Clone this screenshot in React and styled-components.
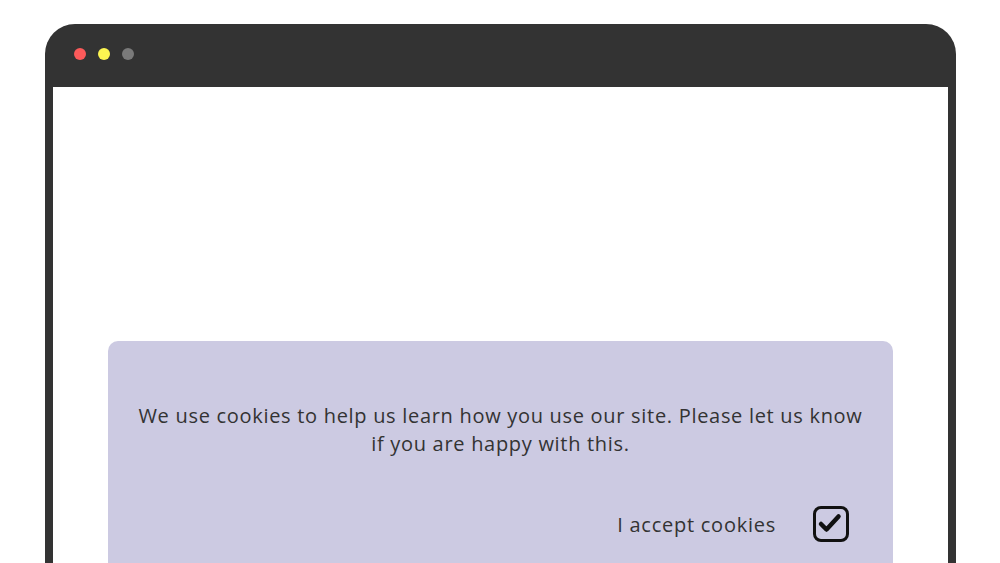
import styled, { createGlobalStyle } from "styled-components";

const GlobalStyle = createGlobalStyle`
  html, body {
    margin: 0;
    padding: 0;
    background: #ffffff;
    overflow: hidden;
  }
  body {
    font-family: "Open Sans", "Liberation Sans", sans-serif;
  }
`;

const Page = styled.div`
  width: 1000px;
  height: 563px;
  padding: 24px 44px 0 45px;
  box-sizing: border-box;
  overflow: hidden;
`;

const Browser = styled.div`
  background: #333333;
  border-radius: 30px 30px 0 0;
  display: flex;
  flex-direction: column;
  padding: 0 8px;
`;

const TopBar = styled.div`
  flex-shrink: 0;
  height: 63px;
  display: flex;
  align-items: center;
  gap: 12px;
  padding-left: 21px;
  padding-bottom: 4px;
  box-sizing: border-box;
`;

const Dot = styled.span`
  width: 12px;
  height: 12px;
  border-radius: 50%;
  background: ${(p) => p.color};
`;

const Screen = styled.div`
  background: #ffffff;
  padding: 254px 55px 0 55px;
`;

const Banner = styled.div`
  background: #cccae2;
  border-radius: 10px;
  padding: 61px 26px 40px;
  color: #333333;
  height: 300px;
  box-sizing: border-box;
`;

const Message = styled.p`
  margin: 0;
  text-align: center;
  font-size: 20px;
  line-height: 28px;
  letter-spacing: 0.7px;
`;

const AcceptRow = styled.label`
  display: flex;
  justify-content: flex-end;
  align-items: center;
  gap: 37px;
  margin-top: 48px;
  padding-right: 18px;
  font-size: 20px;
  letter-spacing: 0.75px;
  cursor: pointer;
`;

const CheckBox = styled.span`
  width: 30px;
  height: 30px;
  border: 3px solid #111111;
  border-radius: 8px;
  display: flex;
  align-items: center;
  justify-content: center;
`;

export default function App() {
  return (
    <>
      <GlobalStyle />
      <Page>
        <Browser>
          <TopBar>
            <Dot color="#fc5a5a" />
            <Dot color="#fcf551" />
            <Dot color="#7a7a7a" />
          </TopBar>
          <Screen>
            <Banner>
              <Message>
                We use cookies to help us learn how you use our site. Please let us know if you are happy with this.
              </Message>
              <AcceptRow>
                I accept cookies
                <CheckBox>
                  <svg width="30" height="30" viewBox="0 0 30 30" fill="none">
                    <path d="M5 15 L10.5 20.5 L22.5 7.5" stroke="#111" strokeWidth="4.5" strokeLinecap="round" strokeLinejoin="round" />
                  </svg>
                </CheckBox>
              </AcceptRow>
            </Banner>
          </Screen>
        </Browser>
      </Page>
    </>
  );
}
